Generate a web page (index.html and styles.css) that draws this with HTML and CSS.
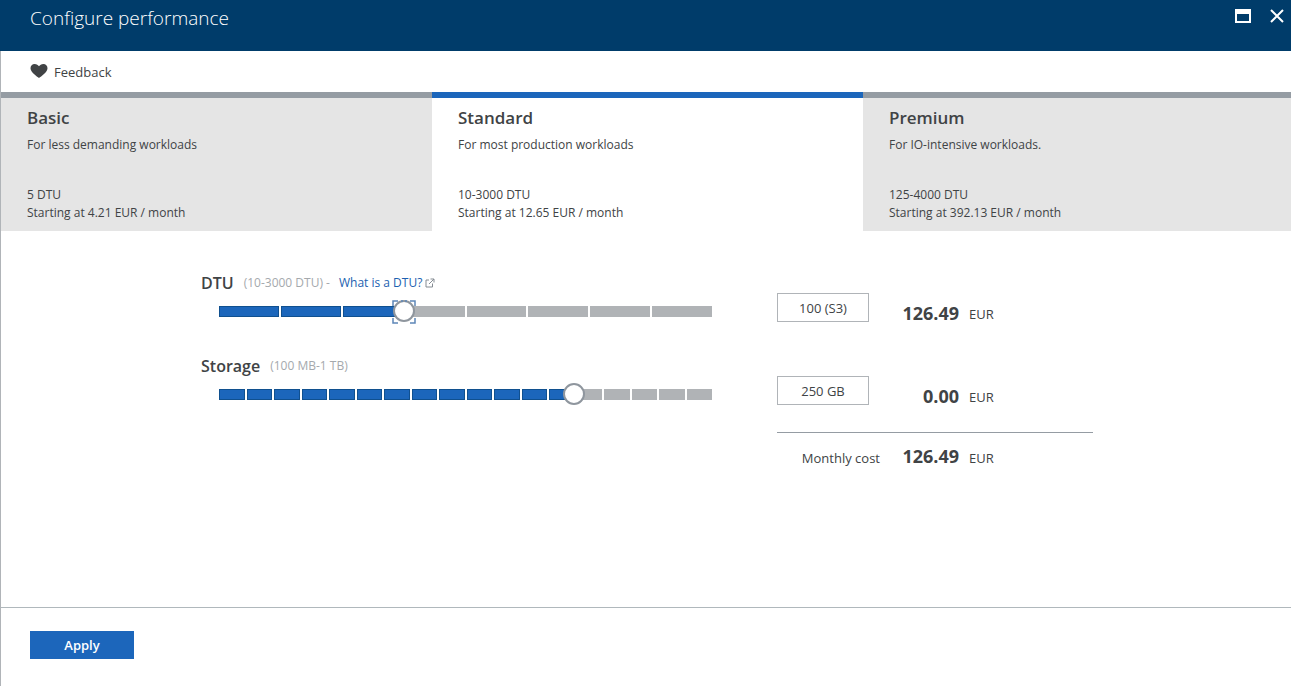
FILE: index.html
```html
<!DOCTYPE html>
<html lang="en">
<head>
<meta charset="utf-8">
<title>Configure performance</title>
<link rel="stylesheet" href="styles.css">
</head>
<body>
<header class="titlebar">
  <h1 class="title">Configure performance</h1>
  <div class="window-actions">
    <button class="icon-button" aria-label="Maximize"><svg width="18" height="16" viewBox="0 0 18 16"><path d="M1 1h16v14H1zM3 6v7h12V6z" fill="#fff" fill-rule="evenodd"/></svg></button>
    <button class="icon-button" aria-label="Close"><svg width="14" height="14" viewBox="0 0 14 14"><path d="M1 1l12 12M13 1L1 13" stroke="#fff" stroke-width="2" fill="none"/></svg></button>
  </div>
</header>
<div class="blade">
  <div class="toolbar">
    <button class="feedback"><svg width="18" height="16" viewBox="0 0 18 16"><path d="M9 14C7 12.500 .5 8.500 .5 4.300 .5 1.800 2.300 0 4.600 0 6.600 0 8.200 1 9 2.300 9.800 1 11.400 0 13.400 0c2.300 0 4.100 1.800 4.100 4.300C17.500 8.500 11 12.500 9 14z" fill="#404345"/></svg>Feedback</button>
  </div>
  <div class="tiers" role="tablist">
    <button class="tier" role="tab" aria-selected="false"><strong class="tier-name">Basic</strong><span class="tier-desc">For less demanding workloads</span><span>5 DTU</span><span>Starting at 4.21 EUR / month</span></button>
    <button class="tier tier-selected" role="tab" aria-selected="true"><strong class="tier-name">Standard</strong><span class="tier-desc">For most production workloads</span><span>10-3000 DTU</span><span>Starting at 12.65 EUR / month</span></button>
    <button class="tier" role="tab" aria-selected="false"><strong class="tier-name">Premium</strong><span class="tier-desc">For IO-intensive workloads.</span><span>125-4000 DTU</span><span>Starting at 392.13 EUR / month</span></button>
  </div>
  <main class="settings">
    <section class="row">
      <div class="control">
        <div class="caption"><label class="name" for="dtu">DTU</label><span class="hint">(10-3000 DTU) -</span><a class="link" href="#dtu-help">What is a DTU?<svg width="10" height="10" viewBox="0 0 10 10"><path d="M4 2H1v7h6.500V5.500M5.500 1H9v3.500M9 1L4 6" stroke="#858c93" fill="none"/></svg></a></div>
        <div class="slider">
          <div class="track"><i class="on"></i><i class="on"></i><i class="on"></i><i></i><i></i><i></i><i></i><i></i></div>
          <input class="range" id="dtu" type="range" min="0" max="8" value="3">
          <svg class="focus-corners" style="left:37.5%" width="24" height="24" viewBox="0 0 24 24"><path d="M1 6V1h5M9 1h2M13 1h2M18 1h5v5M23 18v5h-5M6 23H1v-5" stroke="#5d86b8" stroke-width="1.500" fill="none"/></svg>
        </div>
      </div>
      <input class="value" aria-label="DTU value" value="100 (S3)">
      <strong class="price">126.49</strong><span class="currency">EUR</span>
    </section>
    <section class="row">
      <div class="control">
        <div class="caption"><label class="name" for="storage">Storage</label><span class="hint">(100 MB-1 TB)</span></div>
        <div class="slider">
          <div class="track"><i class="on"></i><i class="on"></i><i class="on"></i><i class="on"></i><i class="on"></i><i class="on"></i><i class="on"></i><i class="on"></i><i class="on"></i><i class="on"></i><i class="on"></i><i class="on"></i><i class="on"></i><i></i><i></i><i></i><i></i><i></i></div>
          <input class="range" id="storage" type="range" min="0" max="100" value="72">
        </div>
      </div>
      <input class="value" aria-label="Storage value" value="250 GB">
      <strong class="price">0.00</strong><span class="currency">EUR</span>
    </section>
    <section class="total">
      <span class="total-label">Monthly cost</span>
      <strong class="price">126.49</strong><span class="currency">EUR</span>
    </section>
  </main>
  <footer class="footer"><button class="apply">Apply</button></footer>
</div>
</body>
</html>
```
FILE: styles.css
```css
* { box-sizing: border-box; }
body {
  margin: 0;
  min-height: 100vh;
  display: flex;
  flex-direction: column;
  font: 12px/18px "Open Sans", "Noto Sans", sans-serif;
  color: #404345;
  background: #fff;
}
button, input { font: inherit; color: inherit; }
button { border: 0; padding: 0; background: none; cursor: pointer; }
svg { display: block; }

.titlebar {
  display: flex;
  justify-content: space-between;
  align-items: flex-start;
  height: 51px;
  padding: 4px 7px 0 30px;
  background: #003c6a;
  color: #fff;
}
.title { margin: 0; font-size: 19px; font-weight: 300; line-height: 28px; }
.window-actions { display: flex; align-items: center; gap: 18px; height: 24px; }

.blade { flex: 1; display: flex; flex-direction: column; border-left: 1px solid #b0b4b8; }
.toolbar { display: flex; align-items: center; height: 41px; padding: 0 29px; }
.feedback { display: flex; align-items: center; gap: 6px; font-size: 13px; }

.tiers { display: grid; grid-template-columns: 431fr 431fr 428fr; }
.tier {
  display: flex;
  flex-direction: column;
  padding: 8px 26px 9px;
  border-top: 6px solid #959ca3;
  background: #e5e5e5;
  text-align: left;
}
.tier-selected { border-color: #1c66bb; background: #fff; }
.tier-name { font-size: 17px; font-weight: 600; line-height: 24px; }
.tier-desc { margin: 6px 0 32px; }

.settings { flex: 1; width: 100%; max-width: 894px; margin: 0 auto; padding: 40px 0 0 2px; }
.row {
  display: grid;
  grid-template-columns: 1fr 92px 90px 134px;
  align-items: end;
  margin-bottom: 31px;
}
.caption { display: flex; align-items: center; height: 24px; margin-bottom: 5px; }
.name { margin-right: 10px; font-size: 16px; font-weight: 600; }
.hint { margin-right: 9px; color: #a5a9ad; }
.link { display: flex; align-items: center; gap: 3px; color: #1c5fb0; text-decoration: none; }

.slider { position: relative; height: 23px; margin: 0 65px 0 18px; padding-top: 6px; }
.track { display: flex; height: 11px; }
.track i { flex: 1; border-right: 2px solid #fff; background: #b0b3b6; background-clip: padding-box; }
.track .on { background-color: #1c66bb; box-shadow: inset 0 0 0 1px #10508f; }
.track i:last-child { border: 0; }
.range {
  position: absolute;
  top: 0;
  left: -11px;
  width: calc(100% + 22px);
  height: 22px;
  margin: 0;
  appearance: none;
  background: none;
}
.range::-webkit-slider-thumb {
  appearance: none;
  width: 22px;
  height: 22px;
  border: 2px solid #8f969e;
  border-radius: 50%;
  background: #fff;
}
.focus-corners { position: absolute; top: 0; transform: translateX(-50%); pointer-events: none; }

.value {
  width: 100%;
  height: 29px;
  margin-bottom: 1px;
  border: 1px solid #b0b4b8;
  background: #fff;
  font-size: 13px;
  text-align: center;
}
.price { font-size: 18px; font-weight: 700; line-height: 20px; text-align: right; }
.currency { padding-left: 10px; font-size: 13px; }
.total {
  display: grid;
  grid-template-columns: 103px 79px 134px;
  align-items: baseline;
  width: 316px;
  margin: -5px 0 0 auto;
  padding-top: 13px;
  border-top: 1px solid #959ca3;
}
.total-label { font-size: 13px; text-align: right; }
.footer { padding: 23px 29px 27px; border-top: 1px solid #b0b8bc; }
.apply {
  display: block;
  width: 104px;
  height: 28px;
  background: #1c66bb;
  color: #fff;
  font-size: 13px;
  font-weight: 600;
}
```
